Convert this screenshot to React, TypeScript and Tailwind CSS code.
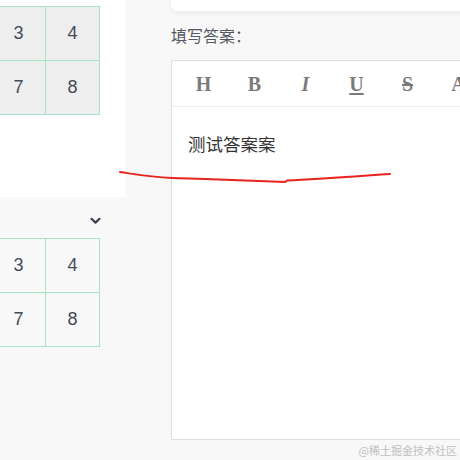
const cellCls = 'w-[54px] h-[54px] border border-[#a8e4c4] text-center align-middle text-[18px] text-[#444a57]'

function NumGrid({ filled }: { filled: boolean }) {
  const rows = [
    ['3', '4'],
    ['7', '8'],
  ]
  return (
    <table className={`border-collapse ml-[-9px] ${filled ? 'bg-[#eeeeee]' : 'bg-[#f8f8f8]'}`}>
      <tbody>
        {rows.map((r, i) => (
          <tr key={i}>
            {r.map(n => (
              <td key={n} className={cellCls}>{n}</td>
            ))}
          </tr>
        ))}
      </tbody>
    </table>
  )
}

const tools = [
  { k: 'H', cls: '' },
  { k: 'B', cls: '' },
  { k: 'I', cls: 'italic' },
  { k: 'U', cls: 'underline underline-offset-2' },
  { k: 'S', cls: 'line-through' },
  { k: 'A', cls: '' },
]

export default function App() {
  return (
    <div className="relative w-[460px] h-[460px] overflow-hidden bg-[#f8f8f8] flex font-['Liberation_Sans','Noto_Sans_CJK_SC',sans-serif]">
      <div className="w-[126px] shrink-0 flex flex-col">
        <div className="h-[197px] bg-white pt-[6px] overflow-hidden">
          <NumGrid filled />
        </div>
        <div className="h-[41px] flex items-center justify-end pr-[25px] pt-[6px]">
          <svg width="11" height="8" viewBox="0 0 11 8" fill="none">
            <path d="M1.5 1.8 L5.5 5.6 L9.5 1.8" stroke="#3c4250" strokeWidth="2.2" strokeLinecap="round" strokeLinejoin="round" />
          </svg>
        </div>
        <div className="overflow-hidden">
          <NumGrid filled={false} />
        </div>
      </div>

      <div className="ml-[45px] flex-1 flex flex-col min-w-[300px]">
        <div className="h-[11px] bg-white rounded-b-[6px] shadow-[0_2px_6px_rgba(0,0,0,0.06)]" />
        <div className="mt-[12px] h-[24px] leading-[24px] text-[16px] text-[#555a62] font-['Noto_Sans_CJK_SC',sans-serif]">
          填写答案：
        </div>
        <div className="mt-[13px] h-[380px] border border-[#d6e0e3] bg-white flex flex-col">
          <div className="h-[46px] border-b border-[#eef0f2] flex items-center pl-[6px] font-['Liberation_Serif',serif] font-bold text-[20px] text-[#7a7a7a]">
            {tools.map(t => (
              <span key={t.k} className={`w-[51px] shrink-0 text-center ${t.cls}`}>{t.k}</span>
            ))}
          </div>
          <div className="px-[16px] pt-[24px] text-[17.5px] leading-[26px] text-[#333333] font-['Noto_Sans_CJK_SC',sans-serif]">
            测试答案案
          </div>
        </div>
      </div>

      <svg className="absolute left-0 top-0 pointer-events-none" width="460" height="460" viewBox="0 0 460 460" fill="none">
        <path
          d="M120 172 C140 175 150 177 172 178 C210 179 250 181 285 182 L287 180.5 C320 179 360 176 390 174"
          stroke="#e8231c"
          strokeWidth="2"
          strokeLinecap="round"
        />
      </svg>

      <div className="absolute right-[3px] bottom-[2px] text-[11px] text-[#c0c0c0] font-['Noto_Sans_CJK_SC',sans-serif]">
        @稀土掘金技术社区
      </div>
    </div>
  )
}
